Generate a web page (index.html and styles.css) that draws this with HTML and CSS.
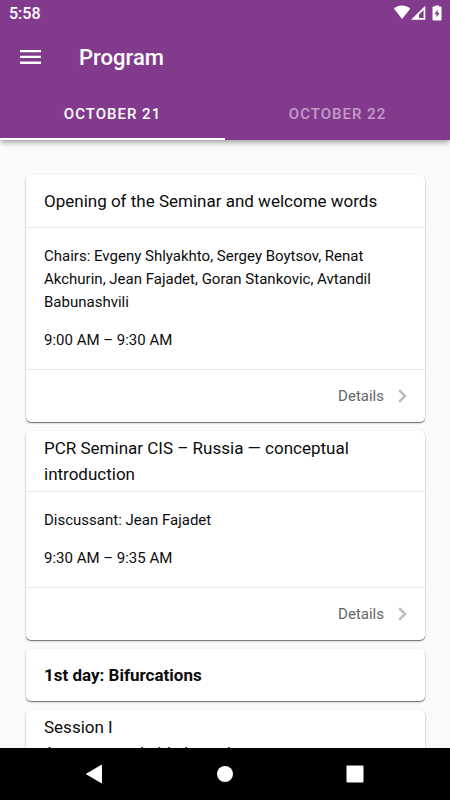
FILE: index.html
```html
<!DOCTYPE html>
<html lang="en">
<head>
<meta charset="utf-8">
<meta name="viewport" content="width=device-width, initial-scale=1">
<title>Program</title>
<link rel="stylesheet" href="styles.css">
</head>
<body>
<header class="header">
  <div class="status">
    <span class="clock">5:58</span>
    <svg class="status-icons" viewBox="0 0 50 16" aria-hidden="true">
      <path fill="#fff" d="M0 3.8C4.6-.6 11.600-.6 16.200 3.800L8.100 14Z"/>
      <path fill="#fff" fill-rule="evenodd" d="M17 14.800L31.300 .8V14.800ZM25 13H29.600V5L25 9.500Z"/>
      <path fill="#fff" fill-rule="evenodd" d="M41 1.500V.5h4v1h1.500a1 1 0 0 1 1 1V14.500a1 1 0 0 1-1 1h-7a1 1 0 0 1-1-1V2.500a1 1 0 0 1 1-1ZM43.500 4.500L40.500 9.200H42.500V12.500L45.500 7.800H43.500Z"/>
    </svg>
  </div>
  <div class="appbar">
    <button class="menu" type="button" aria-label="Open menu">
      <svg viewBox="0 0 21 14"><path fill="#fff" d="M0 0h21v2.300H0zM0 5.800h21v2.300H0zM0 11.600h21v2.300H0z"/></svg>
    </button>
    <h1 class="app-title">Program</h1>
  </div>
  <nav class="tabs">
    <button class="tab tab-active" type="button">OCTOBER 21</button>
    <button class="tab" type="button">OCTOBER 22</button>
  </nav>
</header>
<main class="program">
  <article class="card">
    <h2 class="card-title">Opening of the Seminar and welcome words</h2>
    <div class="card-body">
      <p>Chairs: Evgeny Shlyakhto, Sergey Boytsov, Renat Akchurin, Jean Fajadet, Goran Stankovic, Avtandil Babunashvili</p>
      <p>9:00 AM – 9:30 AM</p>
    </div>
    <a class="details" href="#">Details
      <svg class="chevron" viewBox="0 0 9 14" aria-hidden="true"><path d="M1.200 1.200L7 7L1.200 12.800"/></svg>
    </a>
  </article>
  <article class="card">
    <h2 class="card-title">PCR Seminar CIS – Russia — conceptual introduction</h2>
    <div class="card-body">
      <p>Discussant: Jean Fajadet</p>
      <p>9:30 AM – 9:35 AM</p>
    </div>
    <a class="details" href="#">Details
      <svg class="chevron" viewBox="0 0 9 14" aria-hidden="true"><path d="M1.200 1.200L7 7L1.200 12.800"/></svg>
    </a>
  </article>
  <article class="card">
    <h2 class="card-title card-section">1st day: Bifurcations</h2>
  </article>
  <article class="card">
    <h2 class="card-title">Session I<br>Anatomy and side branch</h2>
  </article>
</main>
<nav class="system-nav">
  <button type="button" aria-label="Back"><svg viewBox="0 0 20 20"><path fill="#fff" d="M17 1.500V18.500a.7.7 0 0 1-1 .5L1.500 10.600a.7.7 0 0 1 0-1.200L16 1a.7.7 0 0 1 1 .5Z"/></svg></button>
  <button type="button" aria-label="Home"><svg viewBox="0 0 20 20"><circle cx="10" cy="10" r="8" fill="#fff"/></svg></button>
  <button type="button" aria-label="Recent apps"><svg viewBox="0 0 20 20"><rect x="1.500" y="1.500" width="17" height="17" rx="1" fill="#fff"/></svg></button>
</nav>
</body>
</html>
```
FILE: styles.css
```css
* {
  box-sizing: border-box;
}

body {
  margin: 0;
  height: 100vh;
  display: flex;
  flex-direction: column;
  overflow: hidden;
  background: #fafafa;
  color: #0c0c0c;
  font-family: Roboto, "Liberation Sans", sans-serif;
}

h1, h2, p {
  margin: 0;
}

button {
  border: 0;
  padding: 0;
  background: none;
  color: inherit;
  font: inherit;
}

svg {
  display: block;
}

.header {
  flex: none;
  background: #823b8c;
  color: #fff;
  box-shadow: 0 2px 6px rgba(0, 0, 0, 0.4);
}

.status {
  display: flex;
  align-items: center;
  justify-content: space-between;
  height: 26px;
  padding: 0 6px 0 9px;
}

.clock {
  font-size: 16px;
  font-weight: 500;
}

.status-icons {
  width: 50px;
  height: 16px;
}

.appbar {
  display: flex;
  align-items: center;
  gap: 38px;
  height: 62px;
  padding: 0 20px;
}

.menu svg {
  width: 21px;
  height: 14px;
}

.app-title {
  font-size: 22px;
  font-weight: 500;
}

.tabs {
  display: grid;
  grid-template-columns: 1fr 1fr;
  height: 52px;
}

.tab {
  padding-top: 2px;
  border-bottom: 2px solid transparent;
  font-size: 15px;
  font-weight: 500;
  letter-spacing: 1px;
  color: #c39bc9;
}

.tab-active {
  border-bottom-color: #fff;
  color: #fff;
}

.program {
  flex: 1;
  min-height: 0;
  overflow: hidden;
  display: flex;
  flex-direction: column;
  gap: 9px;
  padding: 35px 25px 0 26px;
}

.card {
  flex: none;
  border-radius: 5px;
  background: #fff;
  box-shadow: 0 1px 1px rgba(0, 0, 0, 0.5), 0 1px 3px rgba(0, 0, 0, 0.15);
}

.card-title {
  display: flex;
  align-items: center;
  min-height: 52px;
  padding: 4px 18px;
  font-size: 17px;
  font-weight: 400;
  line-height: 26px;
}

.card-section {
  font-weight: 700;
}

.card-body {
  display: grid;
  gap: 15px;
  padding: 17px 18px;
  border: solid #e8e8e8;
  border-width: 1px 0;
  font-size: 15px;
  line-height: 23px;
}

.details {
  display: flex;
  align-items: center;
  justify-content: flex-end;
  gap: 14px;
  height: 52px;
  padding: 0 18px;
  color: #666;
  font-size: 15px;
  text-decoration: none;
}

.chevron {
  width: 9px;
  height: 14px;
}

.chevron path {
  fill: none;
  stroke: #bdbdbf;
  stroke-width: 2.500;
}

.system-nav {
  flex: none;
  display: flex;
  align-items: center;
  justify-content: center;
  gap: 110px;
  height: 52px;
  background: #000;
}

.system-nav svg {
  width: 20px;
  height: 20px;
}
```
